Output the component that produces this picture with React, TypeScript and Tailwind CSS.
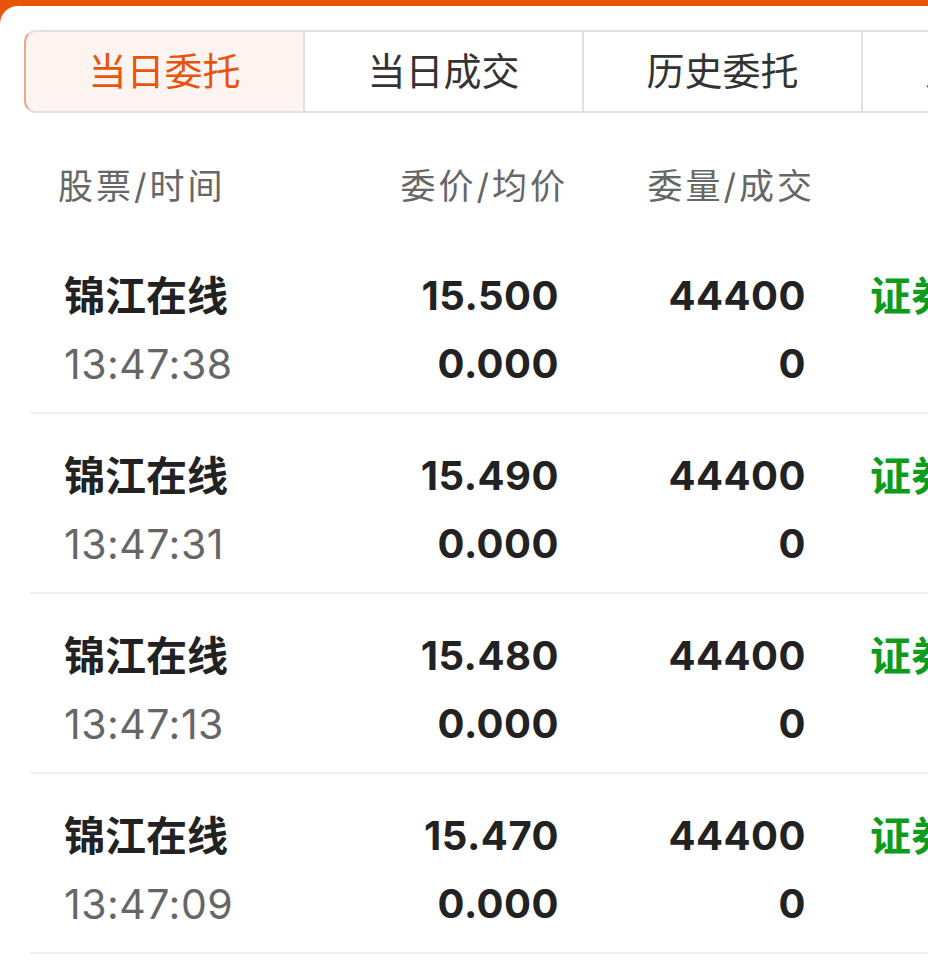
import React from "react";

const orders = [
	{ name: "锦江在线", time: "13:47:38", price: "15.500", avg: "0.000", qty: "44400", deal: "0" },
	{ name: "锦江在线", time: "13:47:31", price: "15.490", avg: "0.000", qty: "44400", deal: "0" },
	{ name: "锦江在线", time: "13:47:13", price: "15.480", avg: "0.000", qty: "44400", deal: "0" },
	{ name: "锦江在线", time: "13:47:09", price: "15.470", avg: "0.000", qty: "44400", deal: "0" },
];

const tabs = ["当日委托", "当日成交", "历史委托", "历史成交"];

const font = { fontFamily: 'Inter, "Noto Sans CJK SC", sans-serif' };

export default function App() {
	return (
		<div className="min-h-[961px] overflow-hidden bg-[#e8540a] pt-[6px]" style={font}>
			<div className="min-h-[955px] rounded-tl-[18px] bg-white">
				{/* Tabs */}
				<div className="flex pl-[24px] pt-[24px]">
					{tabs.map((t, i) => (
						<div
							key={t}
							className={
								i === 0
									? "flex h-[83px] w-[279px] shrink-0 items-center justify-center rounded-l-[12px] border-y-2 border-l-2 border-y-[#dde0e4] border-l-[#e9a98a] bg-[#fdf4f1] text-[38px] text-[#e8540a]"
									: "flex h-[83px] w-[279px] shrink-0 items-center justify-center border-y-2 border-l-2 border-[#dde0e4] text-[38px] text-[#333]"
							}
						>
							{t}
						</div>
					))}
				</div>

				{/* Header */}
				<div className="flex h-[121px] pt-[48px] text-[35px] leading-[50px] tracking-[3px] text-[#666]">
					<div className="w-[300px] shrink-0 pl-[58px]">股票/时间</div>
					<div className="w-[268px] shrink-0 text-right">委价/均价</div>
					<div className="w-[247px] shrink-0 text-right">委量/成交</div>
				</div>

				{/* Rows */}
				{orders.map((o, i) => (
					<div key={i} className="ml-[30px] flex h-[180px] border-b-2 border-[#efefef] pt-[28px]">
						<div className="w-[304px] shrink-0 pl-[34px]">
							<div className="h-[68px] text-[41px] leading-[68px] font-bold text-[#222]">{o.name}</div>
							<div className="h-[68px] text-[41px] leading-[68px] tracking-[0.5px] text-[#666]">{o.time}</div>
						</div>
						<div className="w-[225px] shrink-0 text-right font-bold tracking-[0.5px] text-[#222]">
							<div className="h-[68px] text-[40px] leading-[68px]">{o.price}</div>
							<div className="h-[68px] text-[40px] leading-[68px]">{o.avg}</div>
						</div>
						<div className="w-[247px] shrink-0 text-right font-bold tracking-[0.5px] text-[#222]">
							<div className="h-[68px] text-[40px] leading-[68px]">{o.qty}</div>
							<div className="h-[68px] text-[40px] leading-[68px]">{o.deal}</div>
						</div>
						<div className="shrink-0 pl-[64px]">
							<div className="h-[68px] whitespace-nowrap text-[41px] leading-[68px] font-bold text-[#0a9c1a]">证券</div>
						</div>
					</div>
				))}
			</div>
		</div>
	);
}
